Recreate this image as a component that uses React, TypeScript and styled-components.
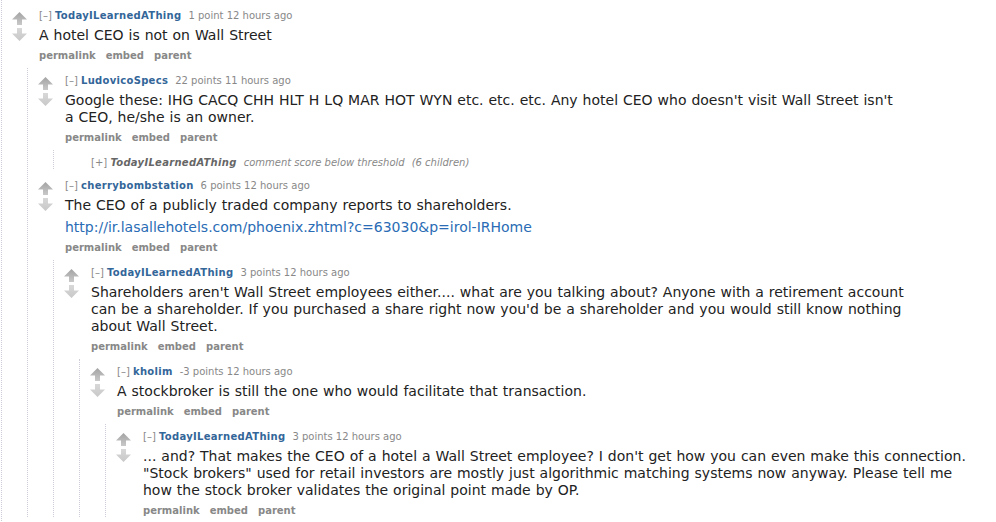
import React from 'react';
import styled, { createGlobalStyle } from 'styled-components';

const GlobalStyle = createGlobalStyle`
  html, body {
    margin: 0;
    padding: 0;
    background: #fff;
    overflow: hidden;
  }
  body {
    font-family: "DejaVu Sans", Verdana, sans-serif;
  }
`;

interface CommentData {
  id: string;
  author: string;
  score?: string;
  time?: string;
  body?: React.ReactNode;
  collapsed?: boolean;
  note?: string;
  replies?: CommentData[];
}

const Thread = styled.div`
  margin-left: 1px;
  padding: 9px 0 0 10px;
  border-left: 1px dotted #cdcdda;
  min-height: 100vh;
`;

const CommentBox = styled.div<{ $collapsed?: boolean }>`
  & + & {
    margin-top: 10px;
  }
`;

const Row = styled.div`
  display: flex;
  align-items: flex-start;
`;

const Midcol = styled.div`
  width: 15px;
  margin-right: 12px;
  flex-shrink: 0;
  display: flex;
  flex-direction: column;
`;

const ArrowIcon = styled.svg<{ $down?: boolean }>`
  display: block;
  width: 15px;
  height: 14px;
  margin-top: ${p => (p.$down ? '1px' : '3px')};
`;

const Entry = styled.div`
  min-width: 0;
`;

const Tagline = styled.p`
  margin: 0;
  font-size: 10px;
  line-height: 13px;
  color: #888;
  white-space: nowrap;
`;

const Expand = styled.span`
  color: #888;
  font-style: normal;
`;

const Author = styled.a<{ $muted?: boolean }>`
  color: ${p => (p.$muted ? '#666' : '#369')};
  font-weight: bold;
  letter-spacing: 0.3px;
  text-decoration: none;
  margin-right: 7px;
`;

const Note = styled.span`
  margin-right: 7px;
`;

const Md = styled.div`
  margin: 5px 0;
  font-size: 14px;
  line-height: 17px;
  word-spacing: 0.5px;
  color: #222;
  white-space: nowrap;

  p {
    margin: 0;
  }
  p + p {
    margin-top: 5px;
  }
`;

const Link = styled.a`
  color: #2a6cb5;
  text-decoration: none;
`;

const Buttons = styled.ul`
  list-style: none;
  margin: 0;
  padding: 0;
  display: flex;
  gap: 10px;
  font-size: 10px;
  line-height: 13px;
  font-weight: bold;
  color: #888;
`;

const Children = styled.div`
  margin: 6px 0 0 15px;
  padding: 6px 0 0 10px;
  border-left: 1px dotted #cdcdda;
`;

const CollapsedLine = styled.p`
  margin: 0;
  padding-left: 27px;
  font-size: 10px;
  line-height: 13px;
  color: #888;
  font-style: italic;
  white-space: nowrap;
`;

const thread: CommentData = {
  id: 'c1',
  author: 'TodayILearnedAThing',
  score: '1 point',
  time: '12 hours ago',
  body: <p>A hotel CEO is not on Wall Street</p>,
  replies: [
    {
      id: 'c2',
      author: 'LudovicoSpecs',
      score: '22 points',
      time: '11 hours ago',
      body: (
        <p>
          Google these: IHG CACQ CHH HLT H LQ MAR HOT WYN etc. etc. etc. Any hotel CEO who doesn't visit Wall Street isn't
          <br />a CEO, he/she is an owner.
        </p>
      ),
      replies: [
        {
          id: 'c2a',
          author: 'TodayILearnedAThing',
          collapsed: true,
          note: 'comment score below threshold',
        },
      ],
    },
    {
      id: 'c3',
      author: 'cherrybombstation',
      score: '6 points',
      time: '12 hours ago',
      body: (
        <>
          <p>The CEO of a publicly traded company reports to shareholders.</p>
          <p>
            <Link href="#">http://ir.lasallehotels.com/phoenix.zhtml?c=63030&amp;p=irol-IRHome</Link>
          </p>
        </>
      ),
      replies: [
        {
          id: 'c4',
          author: 'TodayILearnedAThing',
          score: '3 points',
          time: '12 hours ago',
          body: (
            <p>
              Shareholders aren't Wall Street employees either.... what are you talking about? Anyone with a retirement account
              <br />
              can be a shareholder. If you purchased a share right now you'd be a shareholder and you would still know nothing
              <br />
              about Wall Street.
            </p>
          ),
          replies: [
            {
              id: 'c5',
              author: 'kholim',
              score: '-3 points',
              time: '12 hours ago',
              body: <p>A stockbroker is still the one who would facilitate that transaction.</p>,
              replies: [
                {
                  id: 'c6',
                  author: 'TodayILearnedAThing',
                  score: '3 points',
                  time: '12 hours ago',
                  body: (
                    <p>
                      ... and? That makes the CEO of a hotel a Wall Street employee? I don't get how you can even make this connection.
                      <br />
                      "Stock brokers" used for retail investors are mostly just algorithmic matching systems now anyway. Please tell me
                      <br />
                      how the stock broker validates the original point made by OP.
                    </p>
                  ),
                },
              ],
            },
          ],
        },
      ],
    },
  ],
};

const UpArrow = () => (
  <ArrowIcon viewBox="0 0 15 14">
    <defs>
      <linearGradient id="upGrad" x1="0" y1="0" x2="0" y2="1">
        <stop offset="0" stopColor="#a3a3a3" />
        <stop offset="1" stopColor="#c9c9c9" />
      </linearGradient>
    </defs>
    <path d="M7.5 0 L15 7.5 L10 7.5 L10 13 L5 13 L5 7.5 L0 7.5 Z" fill="url(#upGrad)" />
  </ArrowIcon>
);

const DownArrow = () => (
  <ArrowIcon viewBox="0 0 15 14" $down>
    <defs>
      <linearGradient id="downGrad" x1="0" y1="0" x2="0" y2="1">
        <stop offset="0" stopColor="#d8d8d8" />
        <stop offset="1" stopColor="#c8c8c8" />
      </linearGradient>
    </defs>
    <path d="M5 1 L10 1 L10 6.5 L15 6.5 L7.5 14 L0 6.5 L5 6.5 Z" fill="url(#downGrad)" />
  </ArrowIcon>
);

const Comment: React.FC<{ data: CommentData }> = ({ data }) => {
  if (data.collapsed) {
    return (
      <CommentBox $collapsed>
        <CollapsedLine>
          <Expand>[+]</Expand> <Author $muted href="#">{data.author}</Author>
          <Note>{data.note}</Note>(6 children)
        </CollapsedLine>
      </CommentBox>
    );
  }

  return (
    <CommentBox>
      <Row>
        <Midcol>
          <UpArrow />
          <DownArrow />
        </Midcol>
        <Entry>
          <Tagline>
            <Expand>[–]</Expand> <Author href="#">{data.author}</Author>
            {data.score} {data.time}
          </Tagline>
          <Md>{data.body}</Md>
          <Buttons>
            <li>permalink</li>
            <li>embed</li>
            <li>parent</li>
          </Buttons>
        </Entry>
      </Row>
      {data.replies && (
        <Children>
          {data.replies.map(r => (
            <Comment key={r.id} data={r} />
          ))}
        </Children>
      )}
    </CommentBox>
  );
};

const App: React.FC = () => (
  <>
    <GlobalStyle />
    <Thread>
      <Comment data={thread} />
    </Thread>
  </>
);

export default App;
